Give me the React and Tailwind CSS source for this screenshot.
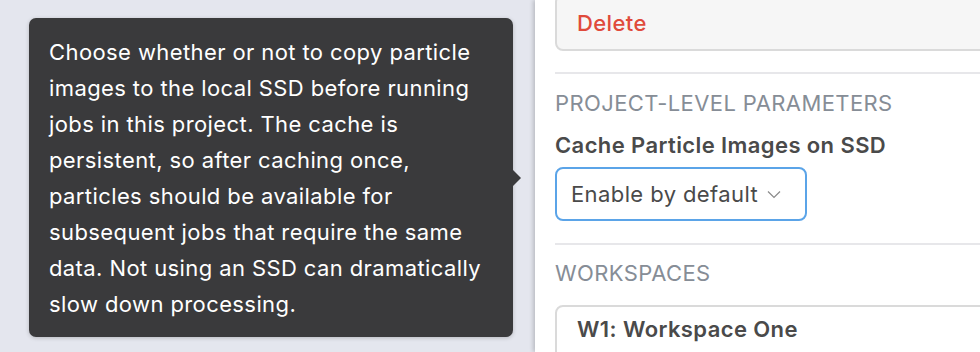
export default function App() {
  const font = { fontFamily: 'Inter, "Noto Sans", sans-serif' };
  return (
    <div className="flex h-[352px] w-[980px] overflow-hidden bg-[#e4e6ee] tracking-[0.4px]" style={font}>
      <div className="w-[535px] shrink-0 pl-[29px] pt-[18px]">
        <div className="relative w-[484px] rounded-[7px] bg-[#3a3a3c] px-[20px] pt-[16px] pb-[15px] text-[22px] leading-[36px] text-white shadow-[0_1px_4px_rgba(0,0,0,0.2)]">
          Choose whether or not to copy particle images to the local SSD before running jobs in this project. The cache is persistent, so after caching once, particles should be available for subsequent jobs that require the same data. Not using an SSD can dramatically slow down processing.
          <div className="absolute right-[-8px] top-[152px] h-0 w-0 border-y-[8px] border-l-[8px] border-y-transparent border-l-[#3a3a3c]" />
        </div>
      </div>
      <div className="flex-1 bg-white pl-[20px] shadow-[-2px_0_4px_rgba(0,0,0,0.18)]">
        <div className="w-[480px]">
          <div className="mt-[-6px] flex h-[57px] items-center rounded-[8px] border-2 border-[#dadada] bg-[#f6f6f6] pl-[20px] pt-[2px] text-[22px] font-medium text-[#e04a3b]">
            Delete
          </div>
          <div className="mt-[21px] h-[2px] bg-[#e7e7ea]" />
          <div className="mt-[15px] text-[22px] leading-[28px] uppercase text-[#868d96]">
            Project-level parameters
          </div>
          <div className="mt-[14px] text-[22px] leading-[28px] font-semibold text-[#4a4a4a]">
            Cache Particle Images on SSD
          </div>
          <div className="mt-[8px] flex h-[54px] w-[252px] items-center gap-[9px] rounded-[8px] border-2 border-[#5ba4e8] pl-[14px] text-[22px] text-[#4a4a4a]">
            <span>Enable by default</span>
            <svg width="14" height="9" viewBox="0 0 14 9" fill="none" className="mt-[1px]">
              <path d="M1 1.5L7 7.5L13 1.5" stroke="#8a8a8a" strokeWidth="1.2" />
            </svg>
          </div>
          <div className="mt-[22px] h-[2px] bg-[#e7e7ea]" />
          <div className="mt-[14px] text-[22px] leading-[28px] uppercase text-[#868d96]">
            Workspaces
          </div>
          <div className="mt-[18px] h-[80px] rounded-[8px] border-2 border-[#dadada] pl-[20px] pt-[8px] text-[22px] leading-[28px] font-semibold text-[#4a4a4a]">
            W1: Workspace One
          </div>
        </div>
      </div>
    </div>
  );
}
